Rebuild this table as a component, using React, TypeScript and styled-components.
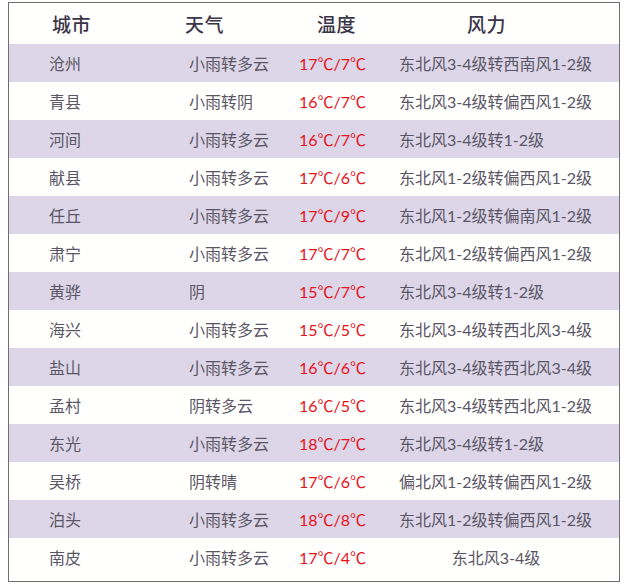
import styled, { createGlobalStyle } from 'styled-components'

const GlobalStyle = createGlobalStyle`
  html, body {
    margin: 0;
    padding: 0;
    background: #ffffff;
  }
  body {
    font-family: "Lato", "Noto Sans CJK SC", "Noto Sans", sans-serif;
  }
`

const Frame = styled.div`
  margin: 2px 0 0 8px;
  width: 610px;
  border: 1.5px solid #6e6e6e;
  background: #fffffd;
  padding-bottom: 5px;
`

const Grid = styled.div`
  display: grid;
  grid-template-columns: 140px 110px 100px 194px 1fr;
  padding-left: 40px;
`

const HeaderRow = styled(Grid)`
  height: 41px;
  align-items: center;
`

const HeaderCell = styled.div<{ $shift: number }>`
  margin-left: ${(p) => p.$shift}px;
  font-size: 19px;
  font-weight: 500;
  color: #3b3548;
  white-space: nowrap;
  letter-spacing: 0.5px;
`

const Row = styled(Grid)<{ $shaded: boolean }>`
  height: 38px;
  align-items: center;
  background: ${(p) => (p.$shaded ? '#dcd6e8' : 'transparent')};
`

const Cell = styled.div`
  font-size: 16px;
  color: #5b5666;
  white-space: nowrap;
`

const TempCell = styled(Cell)`
  color: #e5121c;
`

const WindCell = styled(Cell)<{ $center: boolean }>`
  text-align: ${(p) => (p.$center ? 'center' : 'left')};
`

interface Forecast {
  city: string
  weather: string
  temp: string
  wind: string
}

const forecasts: Forecast[] = [
  { city: '沧州', weather: '小雨转多云', temp: '17℃/7℃', wind: '东北风3-4级转西南风1-2级' },
  { city: '青县', weather: '小雨转阴', temp: '16℃/7℃', wind: '东北风3-4级转偏西风1-2级' },
  { city: '河间', weather: '小雨转多云', temp: '16℃/7℃', wind: '东北风3-4级转1-2级' },
  { city: '献县', weather: '小雨转多云', temp: '17℃/6℃', wind: '东北风1-2级转偏西风1-2级' },
  { city: '任丘', weather: '小雨转多云', temp: '17℃/9℃', wind: '东北风1-2级转偏南风1-2级' },
  { city: '肃宁', weather: '小雨转多云', temp: '17℃/7℃', wind: '东北风1-2级转偏西风1-2级' },
  { city: '黄骅', weather: '阴', temp: '15℃/7℃', wind: '东北风3-4级转1-2级' },
  { city: '海兴', weather: '小雨转多云', temp: '15℃/5℃', wind: '东北风3-4级转西北风3-4级' },
  { city: '盐山', weather: '小雨转多云', temp: '16℃/6℃', wind: '东北风3-4级转西北风3-4级' },
  { city: '孟村', weather: '阴转多云', temp: '16℃/5℃', wind: '东北风3-4级转西北风1-2级' },
  { city: '东光', weather: '小雨转多云', temp: '18℃/7℃', wind: '东北风3-4级转1-2级' },
  { city: '吴桥', weather: '阴转晴', temp: '17℃/6℃', wind: '偏北风1-2级转偏西风1-2级' },
  { city: '泊头', weather: '小雨转多云', temp: '18℃/8℃', wind: '东北风1-2级转偏西风1-2级' },
  { city: '南皮', weather: '小雨转多云', temp: '17℃/4℃', wind: '东北风3-4级' }
]

export default function App(): JSX.Element {
  return (
    <>
      <GlobalStyle />
      <Frame>
        <HeaderRow>
          <HeaderCell $shift={3}>城市</HeaderCell>
          <HeaderCell $shift={-4}>天气</HeaderCell>
          <HeaderCell $shift={18}>温度</HeaderCell>
          <HeaderCell $shift={68}>风力</HeaderCell>
        </HeaderRow>
        {forecasts.map((f, i) => (
          <Row key={f.city} $shaded={i % 2 === 0}>
            <Cell>{f.city}</Cell>
            <Cell>{f.weather}</Cell>
            <TempCell>{f.temp}</TempCell>
            <WindCell $center={i === forecasts.length - 1}>{f.wind}</WindCell>
          </Row>
        ))}
      </Frame>
    </>
  )
}
